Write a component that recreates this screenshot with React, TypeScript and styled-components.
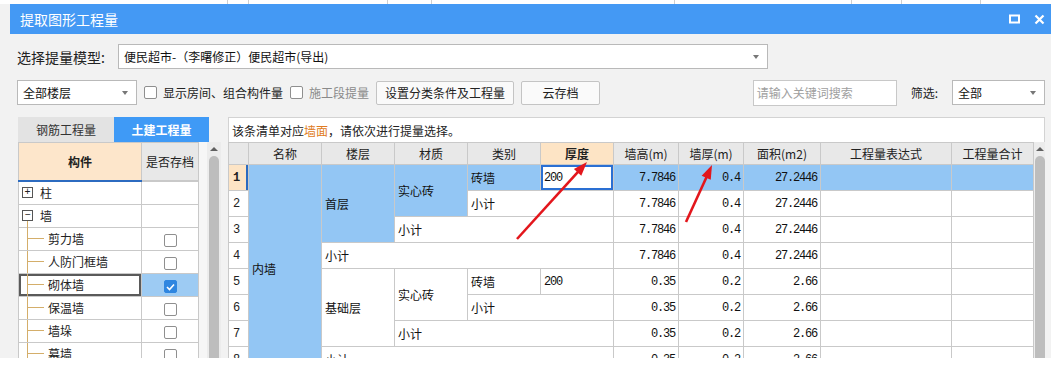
import styled, { createGlobalStyle } from "styled-components";

const GlobalStyle = createGlobalStyle`
  html, body { margin: 0; padding: 0; background: #fff; }
  body {
    font-family: "Noto Sans CJK SC", "Microsoft YaHei", sans-serif;
    font-size: 12px;
    color: #222;
  }
  * { box-sizing: border-box; }
`;

const MONO = `"Liberation Mono", "DejaVu Sans Mono", monospace`;
const LINE = "#c9c9c9";
const SEL = "#93c6f4";
const TREE = "#d4ae6a";

const Page = styled.div`
  width: 1051px;
  height: 368px;
  overflow: hidden;
  background: #fff;
`;

const BackStrip = styled.div`
  display: flex;
  height: 4px;
  background: #fff;
`;

const BackCell = styled.div<{ $w: number }>`
  width: ${(p) => p.$w}px;
  border-right: 1px solid #cfcfcf;
`;

const Dialog = styled.div`
  height: 354px;
  background: #f2f2f2;
  display: flex;
  flex-direction: column;
  overflow: hidden;
`;

const TitleBar = styled.div`
  height: 30px;
  margin-left: 10px;
  background: #4499f4;
  color: #fff;
  display: flex;
  align-items: center;
  justify-content: space-between;
  padding: 0 6px 0 10px;
  font-size: 14px;
`;

const WinButtons = styled.div`
  display: flex;
  gap: 14px;
  align-items: center;
`;

const Body = styled.div`
  padding: 0 6px 0 17px;
`;

const ModelRow = styled.div`
  margin-top: 10px;
  height: 25px;
  display: flex;
  align-items: center;
`;

const Label = styled.span<{ $size?: number }>`
  font-size: ${(p) => p.$size ?? 12}px;
  color: #222;
  white-space: nowrap;
`;

const ModelLabel = styled(Label)`
  width: 101px;
`;

const SelectBox = styled.div<{ $w: number }>`
  position: relative;
  width: ${(p) => p.$w}px;
  height: 25px;
  background: #fff;
  border: 1px solid #b9b9b9;
  display: flex;
  align-items: center;
  padding-left: 5px;
  font-size: 12px;
  color: #111;
`;

const Caret = styled.span`
  position: absolute;
  right: 8px;
  top: 10px;
  width: 0;
  height: 0;
  border-left: 3px solid transparent;
  border-right: 3px solid transparent;
  border-top: 4px solid #777;
`;

const Toolbar = styled.div`
  margin-top: 11px;
  height: 25px;
  display: flex;
  align-items: center;
`;

const CheckItem = styled.label<{ $muted?: boolean }>`
  display: flex;
  align-items: center;
  gap: 6px;
  margin-left: 7px;
  color: ${(p) => (p.$muted ? "#8a8a8a" : "#222")};
  white-space: nowrap;
`;

const Box = styled.span<{ $checked?: boolean }>`
  width: 13px;
  height: 13px;
  border: 1px solid ${(p) => (p.$checked ? "#2f86e0" : "#8f8f8f")};
  border-radius: 2px;
  background: ${(p) => (p.$checked ? "#2f86e0" : "#fff")};
  display: inline-flex;
  align-items: center;
  justify-content: center;
`;

const Button = styled.div<{ $w: number }>`
  width: ${(p) => p.$w}px;
  height: 24px;
  margin-left: 7px;
  border: 1px solid #c4c4c4;
  border-radius: 2px;
  background: #fafafa;
  display: flex;
  align-items: center;
  justify-content: center;
  color: #222;
`;

const Search = styled.div`
  margin-left: auto;
  width: 144px;
  height: 26px;
  border: 1px solid #c8c8c8;
  background: #fff;
  color: #a0a0a0;
  display: flex;
  align-items: center;
  padding-left: 3px;
`;

const FilterLabel = styled(Label)`
  margin: 0 14px;
`;

const Main = styled.div`
  margin-top: 12px;
  display: flex;
  height: 241px;
`;

const LeftPane = styled.div`
  margin-left: 1px;
  width: 203px;
  display: flex;
  flex-direction: column;
`;

const Tabs = styled.div`
  display: flex;
  height: 25px;
`;

const Tab = styled.div<{ $active?: boolean; $w: number }>`
  width: ${(p) => p.$w}px;
  display: flex;
  align-items: center;
  justify-content: center;
  background: ${(p) => (p.$active ? "#3f9af6" : "#e3e3e3")};
  color: ${(p) => (p.$active ? "#fff" : "#333")};
  font-weight: ${(p) => (p.$active ? 700 : 400)};
`;

const LeftBody = styled.div`
  flex: 1;
  display: flex;
  justify-content: space-between;
  background: #f6f6f6;
  overflow: hidden;
`;

const TreeTable = styled.table`
  border-collapse: collapse;
  table-layout: fixed;
  width: 180px;
  background: #fff;
  align-self: flex-start;
`;

const TreeHead = styled.th<{ $main?: boolean }>`
  height: 38px;
  padding: 0;
  border: 1px solid ${LINE};
  border-bottom: 2px solid ${(p) => (p.$main ? "#2c6bc0" : LINE)};
  background: ${(p) => (p.$main ? "#fde6cb" : "#e8e8e8")};
  font-weight: ${(p) => (p.$main ? 700 : 400)};
  color: #222;
`;

const TreeCell = styled.td<{ $focus?: boolean }>`
  height: 23px;
  padding: 0 0 0 3px;
  border: 1px solid ${LINE};
  white-space: nowrap;
  background: #fff;
  box-shadow: ${(p) => (p.$focus ? "inset 0 0 0 2px #5a5a5a" : "none")};
`;

const TreeLabel = styled.span`
  display: flex;
  align-items: center;
  height: 22px;
`;

const Toggle = styled.span<{ $open?: boolean }>`
  position: relative;
  width: 11px;
  height: 11px;
  border: 1px solid #555;
  background: #fff;
  display: inline-flex;
  align-items: center;
  justify-content: center;
  font-size: 10px;
  line-height: 1;
  margin-right: 7px;
  font-family: ${MONO};

  &::after {
    content: "";
    display: ${(p) => (p.$open ? "block" : "none")};
    position: absolute;
    left: 4px;
    top: 10px;
    height: 7px;
    border-left: 1px solid ${TREE};
  }
`;

/* trunk down the left, branch across the middle */
const Branch = styled.span`
  align-self: stretch;
  width: 17px;
  margin: 0 4px 0 5px;
  border-left: 1px solid ${TREE};
  display: flex;
  align-items: center;

  &::after {
    content: "";
    flex: 1;
    border-top: 1px solid ${TREE};
  }
`;

const CheckCell = styled.td<{ $sel?: boolean }>`
  padding: 0;
  border: 1px solid ${LINE};
  text-align: center;
  background: ${(p) => (p.$sel ? "#9dcbf3" : "#fff")};
  & > span { vertical-align: middle; }
`;

const Scrollbar = styled.div<{ $w: number }>`
  width: ${(p) => p.$w}px;
  background: #ececec;
  display: flex;
  flex-direction: column;
  align-items: center;
  padding-top: 5px;
  flex-shrink: 0;
`;

const UpArrow = styled.span`
  width: 0;
  height: 0;
  border-left: 4px solid transparent;
  border-right: 4px solid transparent;
  border-bottom: 4px solid #606060;
`;

const Thumb = styled.div`
  margin-top: 5px;
  width: 10px;
  flex: 1;
  border-radius: 5px 5px 0 0;
  background: #bdbdbd;
`;

const RightPane = styled.div`
  margin-left: 7px;
  width: 817px;
  display: flex;
  flex-direction: column;
`;

const InfoBar = styled.div`
  height: 25px;
  background: #fff;
  border: 1px solid #d3d3d3;
  border-bottom: none;
  display: flex;
  align-items: center;
  padding-left: 3px;
`;

const Accent = styled.span`
  color: #e07b22;
`;

const GridWrap = styled.div`
  position: relative;
  flex: 1;
  display: flex;
  overflow: hidden;
  background: #fff;
`;

const Grid = styled.table`
  border-collapse: collapse;
  table-layout: fixed;
  width: 805px;
  align-self: flex-start;
`;

const Th = styled.th<{ $active?: boolean }>`
  height: 22px;
  padding: 0;
  border: 1px solid ${LINE};
  background: ${(p) => (p.$active ? "#fde4c5" : "#e8e8e8")};
  font-weight: ${(p) => (p.$active ? 700 : 400)};
  color: #222;
  white-space: nowrap;
  overflow: hidden;
`;

const Td = styled.td<{ $sel?: boolean; $num?: boolean; $edit?: boolean }>`
  height: 26px;
  padding: ${(p) => (p.$num ? "0 3px 0 0" : "0 0 0 3px")};
  border: 1px solid ${LINE};
  background: ${(p) => (p.$edit ? "#fff" : p.$sel ? SEL : "#fff")};
  box-shadow: ${(p) => (p.$edit ? "inset 0 0 0 2px #2a6fd3" : "none")};
  text-align: ${(p) => (p.$num ? "right" : "left")};
  font-family: ${(p) => (p.$num ? MONO : "inherit")};
  letter-spacing: ${(p) => (p.$num ? "-1.2px" : "normal")};
  white-space: nowrap;
  color: #111;
`;

const CodeTd = styled(Td)`
  font-family: ${MONO};
  letter-spacing: -1.2px;
`;

const RowNo = styled.td<{ $current?: boolean }>`
  padding: 0 0 0 4px;
  border: 1px solid ${LINE};
  background: ${(p) => (p.$current ? "#fde4c5" : "#fff")};
  box-shadow: ${(p) => (p.$current ? "inset -2px 0 0 #2c6bc0" : "none")};
  font-family: ${MONO};
  font-weight: ${(p) => (p.$current ? 700 : 400)};
  color: #222;
`;

const Overlay = styled.svg`
  position: absolute;
  left: 0;
  top: 0;
  pointer-events: none;
`;

function Arrow({ x1, y1, x2, y2 }: { x1: number; y1: number; x2: number; y2: number }) {
  const dx = x2 - x1;
  const dy = y2 - y1;
  const len = Math.hypot(dx, dy);
  const ux = dx / len;
  const uy = dy / len;
  const bx = x2 - ux * 14;
  const by = y2 - uy * 14;
  const px = -uy * 5;
  const py = ux * 5;
  return (
    <g>
      <line x1={x1} y1={y1} x2={bx + ux * 2} y2={by + uy * 2} stroke="#e3161c" strokeWidth={2.6} />
      <polygon points={`${x2},${y2} ${bx + px},${by + py} ${bx - px},${by - py}`} fill="#e3161c" />
    </g>
  );
}

const columns = [
  { w: 20, t: "" },
  { w: 73, t: "名称" },
  { w: 73, t: "楼层" },
  { w: 73, t: "材质" },
  { w: 73, t: "类别" },
  { w: 73, t: "厚度", active: true },
  { w: 65, t: "墙高(m)" },
  { w: 65, t: "墙厚(m)" },
  { w: 77, t: "面积(m2)" },
  { w: 131, t: "工程量表达式" },
  { w: 82, t: "工程量合计" },
];

const treeRows = [
  { name: "柱", kind: "plus" },
  { name: "墙", kind: "minus" },
  { name: "剪力墙", kind: "child" },
  { name: "人防门框墙", kind: "child" },
  { name: "砌体墙", kind: "child", checked: true },
  { name: "保温墙", kind: "child" },
  { name: "墙垛", kind: "child" },
  { name: "幕墙", kind: "child" },
];

function Values({ h, t, a, sel }: { h: string; t: string; a: string; sel?: boolean }) {
  return (
    <>
      <Td $num $sel={sel}>{h}</Td>
      <Td $num $sel={sel}>{t}</Td>
      <Td $num $sel={sel}>{a}</Td>
      <Td $sel={sel} />
      <Td $sel={sel} />
    </>
  );
}

export default function App() {
  const upper = { h: "7.7846", t: "0.4", a: "27.2446" };
  const lower = { h: "0.35", t: "0.2", a: "2.66" };

  return (
    <Page>
      <GlobalStyle />
      <BackStrip>
        <BackCell $w={228} />
        <BackCell $w={21} />
        <BackCell $w={139} />
        <BackCell $w={44} />
        <BackCell $w={243} />
        <BackCell $w={177} />
        <BackCell $w={50} />
        <BackCell $w={79} />
      </BackStrip>
      <Dialog>
        <TitleBar>
          <span>提取图形工程量</span>
          <WinButtons>
            <svg width="11" height="10" viewBox="0 0 11 10">
              <rect x="1" y="1.5" width="9" height="7" fill="none" stroke="#fff" strokeWidth="2" />
            </svg>
            <svg width="11" height="11" viewBox="0 0 11 11">
              <path d="M1.5 1.5 L9.5 9.5 M9.5 1.5 L1.5 9.5" stroke="#fff" strokeWidth="2.2" />
            </svg>
          </WinButtons>
        </TitleBar>
        <Body>
          <ModelRow>
            <ModelLabel $size={14}>选择提量模型:</ModelLabel>
            <SelectBox $w={650}>
              便民超市-（李曙修正）便民超市(导出)
              <Caret />
            </SelectBox>
          </ModelRow>
          <Toolbar>
            <SelectBox $w={120}>
              全部楼层
              <Caret />
            </SelectBox>
            <CheckItem>
              <Box />
              显示房间、组合构件量
            </CheckItem>
            <CheckItem $muted>
              <Box />
              施工段提量
            </CheckItem>
            <Button $w={138}>设置分类条件及工程量</Button>
            <Button $w={79}>云存档</Button>
            <Search>请输入关键词搜索</Search>
            <FilterLabel>筛选:</FilterLabel>
            <SelectBox $w={93}>
              全部
              <Caret />
            </SelectBox>
          </Toolbar>
          <Main>
            <LeftPane>
              <Tabs>
                <Tab $w={96}>钢筋工程量</Tab>
                <Tab $w={95} $active>土建工程量</Tab>
              </Tabs>
              <LeftBody>
                <TreeTable>
                  <colgroup>
                    <col style={{ width: 123 }} />
                    <col style={{ width: 57 }} />
                  </colgroup>
                  <thead>
                    <tr>
                      <TreeHead $main>构件</TreeHead>
                      <TreeHead>是否存档</TreeHead>
                    </tr>
                  </thead>
                  <tbody>
                    {treeRows.map((r) => (
                      <tr key={r.name}>
                        <TreeCell $focus={r.checked}>
                          <TreeLabel>
                            {r.kind === "child" ? (
                              <Branch />
                            ) : (
                              <Toggle $open={r.kind === "minus"}>{r.kind === "plus" ? "+" : "−"}</Toggle>
                            )}
                            {r.name}
                          </TreeLabel>
                        </TreeCell>
                        <CheckCell $sel={r.checked}>
                          {r.kind === "child" && (
                            <Box $checked={r.checked}>
                              {r.checked && (
                                <svg width="9" height="8" viewBox="0 0 9 8">
                                  <path d="M1 4 L3.5 6.5 L8 1.5" fill="none" stroke="#fff" strokeWidth="1.6" />
                                </svg>
                              )}
                            </Box>
                          )}
                        </CheckCell>
                      </tr>
                    ))}
                  </tbody>
                </TreeTable>
                <Scrollbar $w={14}>
                  <UpArrow />
                  <Thumb />
                </Scrollbar>
              </LeftBody>
            </LeftPane>
            <RightPane>
              <InfoBar>
                该条清单对应<Accent>墙面</Accent>，请依次进行提量选择。
              </InfoBar>
              <GridWrap>
                <Grid>
                  <colgroup>
                    {columns.map((c, i) => (
                      <col key={i} style={{ width: c.w }} />
                    ))}
                  </colgroup>
                  <thead>
                    <tr>
                      {columns.map((c, i) => (
                        <Th key={i} $active={c.active}>{c.t}</Th>
                      ))}
                    </tr>
                  </thead>
                  <tbody>
                    <tr>
                      <RowNo $current>1</RowNo>
                      <Td $sel rowSpan={8}>内墙</Td>
                      <Td $sel rowSpan={3}>首层</Td>
                      <Td $sel rowSpan={2}>实心砖</Td>
                      <Td $sel>砖墙</Td>
                      <CodeTd $edit>200</CodeTd>
                      <Values {...upper} sel />
                    </tr>
                    <tr>
                      <RowNo>2</RowNo>
                      <Td colSpan={2}>小计</Td>
                      <Values {...upper} />
                    </tr>
                    <tr>
                      <RowNo>3</RowNo>
                      <Td colSpan={3}>小计</Td>
                      <Values {...upper} />
                    </tr>
                    <tr>
                      <RowNo>4</RowNo>
                      <Td colSpan={4}>小计</Td>
                      <Values {...upper} />
                    </tr>
                    <tr>
                      <RowNo>5</RowNo>
                      <Td rowSpan={3}>基础层</Td>
                      <Td rowSpan={2}>实心砖</Td>
                      <Td>砖墙</Td>
                      <CodeTd>200</CodeTd>
                      <Values {...lower} />
                    </tr>
                    <tr>
                      <RowNo>6</RowNo>
                      <Td colSpan={2}>小计</Td>
                      <Values {...lower} />
                    </tr>
                    <tr>
                      <RowNo>7</RowNo>
                      <Td colSpan={3}>小计</Td>
                      <Values {...lower} />
                    </tr>
                    <tr>
                      <RowNo>8</RowNo>
                      <Td colSpan={4}>小计</Td>
                      <Values {...lower} />
                    </tr>
                  </tbody>
                </Grid>
                <Scrollbar $w={12}>
                  <UpArrow />
                  <Thumb />
                </Scrollbar>
                <Overlay width="805" height="216">
                  <Arrow x1={289} y1={97} x2={359} y2={20} />
                  <Arrow x1={458} y1={80} x2={484} y2={23} />
                </Overlay>
              </GridWrap>
            </RightPane>
          </Main>
        </Body>
      </Dialog>
    </Page>
  );
}
